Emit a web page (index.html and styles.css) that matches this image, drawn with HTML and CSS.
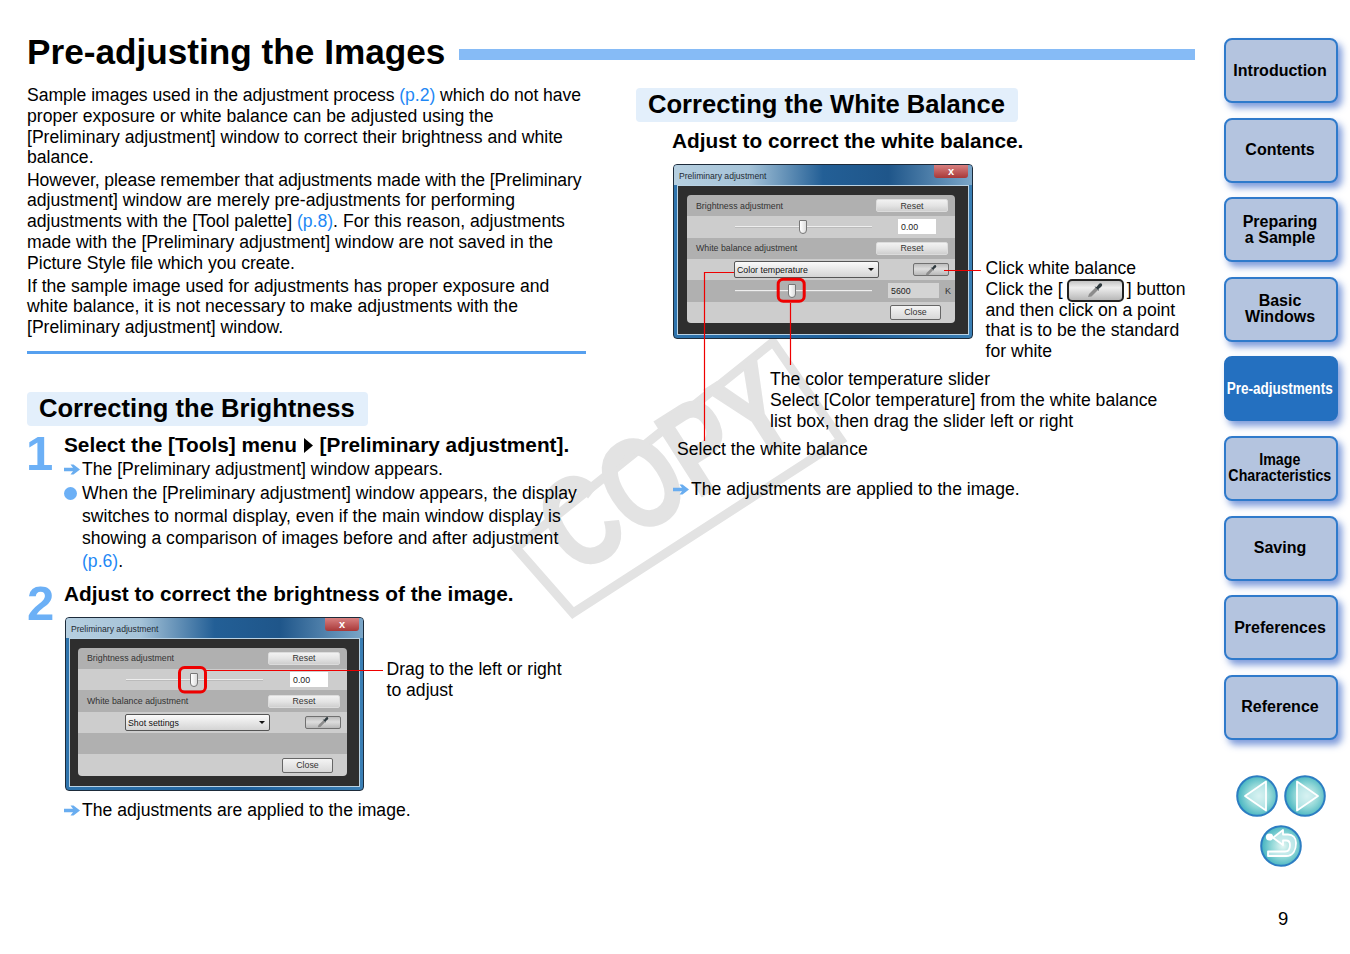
FILE: index.html
```html
<!DOCTYPE html>
<html lang="en">
<head>
<meta charset="utf-8">
<title>Pre-adjusting the Images</title>
<link rel="stylesheet" href="styles.css">
</head>
<body>
<svg width="0" height="0" class="defs">
  <defs>
    <radialGradient id="glass" cx="55%" cy="50%" r="55%">
      <stop offset="0" stop-color="#e4f7f4"/>
      <stop offset="0.55" stop-color="#8ed6d6"/>
      <stop offset="1" stop-color="#3fb1bf"/>
    </radialGradient>
    <symbol id="arrow" viewBox="0 0 16 11">
      <path d="M0 3.800H9L6.500 0.500H9.500L16 5.500 9.500 10.500H6.500L9 7.200H0Z" fill="#69adf0"/>
    </symbol>
    <symbol id="dropper" viewBox="0 0 16 16">
      <path d="M1 15 2 12 8.500 5.500 11 8 4.500 14.500Z" fill="#8c8c8c"/>
      <path d="M7.500 4.500 9.500 5 11.500 2.500Q13 .5 14.500 1.500 16 3 14 5L11.500 7 12 9Z" fill="#2f3a3f"/>
    </symbol>
  </defs>
</svg>
<div class="page">
  <main class="main">
    <svg class="watermark" width="900" height="400" aria-hidden="true">
      <polygon class="stamp" points="546,276 814,103 746,5 489,211"/>
      <text class="stamp-text" transform="translate(548,240) rotate(-32.500) scale(.75,1)">COPY</text>
    </svg>
    <header class="title-row">
      <h1 class="title">Pre-adjusting the Images</h1>
      <div class="title-bar"></div>
    </header>
    <div class="columns">
      <section class="col-left">
        <p class="para"><span class="tight">Sample images used in the adjustment process <a class="ref">(p.2)</a> which do not have</span><br>proper exposure or white balance can be adjusted using the<br>[Preliminary adjustment] window to correct their brightness and white<br>balance.</p>
        <p class="para para-b"><span class="tighter">However, please remember that adjustments made with the [Preliminary</span><br>adjustment] window are merely pre-adjustments for performing<br>adjustments with the [Tool palette] <a class="ref">(p.8)</a>. For this reason, adjustments<br>made with the [Preliminary adjustment] window are not saved in the<br>Picture Style file which you create.</p>
        <p class="para para-c">If the sample image used for adjustments has proper exposure and<br>white balance, it is not necessary to make adjustments with the<br>[Preliminary adjustment] window.</p>
        <div class="rule"></div>
        <h2 class="section section-bright">Correcting the Brightness</h2>

        <div class="step step-one">
          <div class="num num-one">1</div>
          <div class="step-body">
            <h3 class="step-head">Select the [Tools] menu <svg class="tri" width="9" height="15" viewBox="0 0 9 15"><path d="M0 0 9 7.500 0 15Z"/></svg> [Preliminary adjustment].</h3>
            <div class="item item-arrow"><svg class="arrow-icon" width="16" height="11"><use href="#arrow"/></svg><span>The [Preliminary adjustment] window appears.</span></div>
            <div class="item item-bullet"><span class="dot"></span><span>When the [Preliminary adjustment] window appears, the display<br>switches to normal display, even if the main window display is<br>showing a comparison of images before and after adjustment<br><a class="ref">(p.6)</a>.</span></div>
          </div>
        </div>

        <div class="step step-two">
          <div class="num num-two">2</div>
          <div class="step-body">
            <h3 class="step-head">Adjust to correct the brightness of the image.</h3>
            <div class="fig fig-bright">
              <div class="win">
                <div class="win-title"><span>Preliminary adjustment</span><b class="win-close">x</b></div>
                <div class="win-body"><div class="panel">
                  <div class="row row-dark"><span class="lbl">Brightness adjustment</span><span class="btn btn-reset">Reset</span></div>
                  <div class="row row-light row-slider"><span class="track"><i class="thumb thumb-mid"></i></span><span class="input">0.00</span></div>
                  <div class="row row-dark"><span class="lbl">White balance adjustment</span><span class="btn btn-reset">Reset</span></div>
                  <div class="row row-light row-select"><span class="select">Shot settings<i class="caret"></i></span><span class="btn btn-drop"><svg width="12" height="12"><use href="#dropper"/></svg></span></div>
                  <div class="row row-dark"></div>
                  <div class="row row-light row-close"><span class="btn btn-close">Close</span></div>
                </div></div>
              </div>
              <p class="callout callout-drag">Drag to the left or right<br>to adjust</p>
              <svg class="leader" aria-hidden="true">
                <rect class="ring" x="114.500" y="50.500" width="26" height="24.500" rx="5"/>
                <path class="line" d="M141 53.500H318"/>
              </svg>
            </div>
            <div class="item item-arrow item-after"><svg class="arrow-icon" width="16" height="11"><use href="#arrow"/></svg><span>The adjustments are applied to the image.</span></div>
          </div>
        </div>
      </section>

      <section class="col-right">
        <h2 class="section section-white">Correcting the White Balance</h2>
        <h3 class="step-head subhead">Adjust to correct the white balance.</h3>
        <div class="fig fig-white">
          <div class="win">
            <div class="win-title"><span>Preliminary adjustment</span><b class="win-close">x</b></div>
            <div class="win-body"><div class="panel">
              <div class="row row-dark"><span class="lbl">Brightness adjustment</span><span class="btn btn-reset">Reset</span></div>
              <div class="row row-light row-slider"><span class="track"><i class="thumb thumb-mid"></i></span><span class="input">0.00</span></div>
              <div class="row row-dark"><span class="lbl">White balance adjustment</span><span class="btn btn-reset">Reset</span></div>
              <div class="row row-light row-select"><span class="select">Color temperature<i class="caret"></i></span><span class="btn btn-drop"><svg width="12" height="12"><use href="#dropper"/></svg></span></div>
              <div class="row row-dark row-slider"><span class="track"><i class="thumb thumb-wb"></i></span><span class="input input-k">5600</span><span class="unit">K</span></div>
              <div class="row row-light row-close"><span class="btn btn-close">Close</span></div>
            </div></div>
          </div>
          <p class="callout callout-click">Click white balance<br>Click the [<span class="inline-btn"><svg width="16" height="16"><use href="#dropper"/></svg></span>] button<br>and then click on a point<br>that is to be the standard<br>for white</p>
          <svg class="leader" aria-hidden="true">
            <rect class="ring" x="105.200" y="115.200" width="26" height="22" rx="5"/>
            <path class="line" d="M271 106.500H308M61 108.500H31.500V277M117.500 139V201"/>
          </svg>
        </div>
        <p class="note note-slider">The color temperature slider<br>Select [Color temperature] from the white balance<br>list box, then drag the slider left or right</p>
        <p class="note note-select">Select the white balance</p>
        <div class="item item-arrow item-result"><svg class="arrow-icon" width="16" height="11"><use href="#arrow"/></svg><span>The adjustments are applied to the image.</span></div>
      </section>
    </div>
  </main>

  <aside class="side">
    <nav class="nav">
      <a class="nav-btn">Introduction</a>
      <a class="nav-btn">Contents</a>
      <a class="nav-btn">Preparing<br>a Sample</a>
      <a class="nav-btn">Basic<br>Windows</a>
      <a class="nav-btn nav-active"><span class="squeeze-more">Pre-adjustments</span></a>
      <a class="nav-btn"><span class="squeeze">Image<br>Characteristics</span></a>
      <a class="nav-btn">Saving</a>
      <a class="nav-btn">Preferences</a>
      <a class="nav-btn">Reference</a>
    </nav>
    <div class="pager">
      <svg class="round" width="42" height="42" viewBox="0 0 42 42"><circle cx="21" cy="21" r="19.800" fill="url(#glass)" stroke="#2c7dc2" stroke-width="2"/><path d="M30 6.500V35.500L9 21Z" fill="#cfeef0" fill-opacity=".6" stroke="#fff" stroke-width="1.800" stroke-linejoin="round"/></svg>
      <svg class="round" width="42" height="42" viewBox="0 0 42 42"><circle cx="21" cy="21" r="19.800" fill="url(#glass)" stroke="#2c7dc2" stroke-width="2"/><path d="M13 6.500V35.500L34 21Z" fill="#cfeef0" fill-opacity=".6" stroke="#fff" stroke-width="1.800" stroke-linejoin="round"/></svg>
      <svg class="round" width="42" height="42" viewBox="0 0 42 42"><circle cx="21" cy="21" r="19.800" fill="url(#glass)" stroke="#2c7dc2" stroke-width="2"/><circle cx="9.500" cy="12" r="3.600" fill="#fff"/><path d="M13 12.700 23 5V9.500H28C33 9.500 36 13 36 18 36 25 33 31 26 31H8V26.500H25C28 26.500 30 24 30 20 30 17 28 15.500 26 15.500H23V20Z" fill="#cfeef0" fill-opacity=".7" stroke="#fff" stroke-width="1.800" stroke-linejoin="round"/></svg>
    </div>
    <div class="page-num">9</div>
  </aside>
</div>
</body>
</html>
```
FILE: styles.css
```css
* { box-sizing: border-box; }
html, body { margin: 0; padding: 0; background: #fff; }
body {
  font-family: "Liberation Sans", Arial, sans-serif;
  font-size: 17.600px;
  line-height: 20.800px;
  color: #000;
}
.defs { position: absolute; }
.page { display: flex; height: 954px; overflow: hidden; }
.main { position: relative; width: 1195px; padding: 32px 0 0 27px; flex: none; }
.side { width: 114px; margin-left: 29px; padding-top: 38px; flex: none; }

/* watermark sits behind everything */
.watermark { position: absolute; left: 27px; top: 337px; overflow: visible; }
.stamp { fill: none; stroke: #e3e3e3; stroke-width: 9; }
.stamp-text { font: 700 128px "Liberation Sans", Arial, sans-serif; fill: #e3e3e3; stroke: #e3e3e3; stroke-width: 2px; }

.title-row { position: relative; display: flex; align-items: center; gap: 14px; height: 40px; }
.title { margin: 0; font-size: 35.200px; line-height: 40px; font-weight: 700; white-space: nowrap; }
.title-bar { flex: 1; height: 11px; margin-top: 5px; background: #86bbf6; }

.columns { position: relative; display: flex; gap: 50px; margin-top: 13px; }
.col-left { width: 559px; flex: none; }
.col-right { flex: 1; padding-top: 3px; }

.para { margin: 0; white-space: nowrap; }
.para-b { margin-top: 1.400px; }
.para-c { margin-top: 2px; }
.tight { letter-spacing: -.05px; }
.tighter { letter-spacing: -.1px; }
.ref { color: #1f88f5; }
.rule { height: 3px; margin-top: 13px; background: #56a0ef; }

.section {
  display: inline-block;
  height: 34px;
  margin: 0;
  padding: 0 14px 0 12px;
  border-radius: 4px;
  background: #e3effb;
  font-size: 25.600px;
  line-height: 32px;
  font-weight: 700;
  white-space: nowrap;
}
.section-bright { display: block; width: 341px; margin-top: 38px; }
.section-white { display: block; width: 382px; }

.step { display: flex; }
.step-one { margin-top: 7px; }
.step-two { margin-top: 9px; }
.num { width: 37px; flex: none; font-size: 49px; line-height: 40px; font-weight: 700; color: #6cb0f6; }
.num-one { margin-left: -1px; width: 38px; }
.num-two { padding-top: 1px; }
.step-body { flex: 1; min-width: 0; }
.step-head { margin: 0; font-size: 20.800px; line-height: 24px; font-weight: 700; white-space: nowrap; }
.subhead { margin: 7px 0 0 36px; }
.tri { margin: 0 1px; vertical-align: -1px; }

.item { display: flex; white-space: nowrap; }
.item-arrow { line-height: 22px; gap: 2px; margin-top: 1px; }
.item-bullet { line-height: 22.700px; margin-top: 2px; gap: 5px; }
.item-after { margin-top: 8px; }
.item-result { margin-top: 18px; margin-left: 37px; }
.arrow-icon { flex: none; margin-top: 6px; }
.dot { flex: none; width: 13px; height: 13px; margin-top: 5px; border-radius: 50%; background: #6cb0f6; }

.fig { position: relative; display: flex; }
.fig-bright { margin: 11px 0 0 1px; gap: 22.500px; }
.fig-white { margin: 11px 0 0 37px; gap: 12.500px; }
.callout { margin: 0; white-space: nowrap; }
.callout-drag { margin-top: 42px; }
.callout-click { margin-top: 94px; }
.inline-btn {
  display: inline-flex;
  align-items: center;
  justify-content: center;
  width: 57px;
  height: 23px;
  margin: -4px 3px -4px 4px;
  vertical-align: middle;
  border: 2px solid #222;
  border-radius: 5px;
  background: linear-gradient(#c4c4c4, #eeeeee 35%, #b8b8b8);
}
.note { margin: 0; white-space: nowrap; }
.note-slider { margin: 7px 0 0 134px; }
.note-select { margin: 8px 0 0 41px; }

.leader { position: absolute; left: 0; top: 0; width: 100%; height: 100%; overflow: visible; pointer-events: none; }
.ring { fill: none; stroke: #ee0000; stroke-width: 3; }
.line { fill: none; stroke: #ee0000; stroke-width: 1.200; }

/* dialog window */
.win {
  flex: none;
  width: 299px;
  height: 174px;
  padding: 0 3px 4px 3px;
  border: 1px solid #1d2b3a;
  border-radius: 4px;
  background: linear-gradient(90deg, #2f74ad, #1e5f9a 60%, #3a7fb5);
  font-size: 8.800px;
  line-height: 12px;
  color: #333;
  overflow: hidden;
}
.fig-white .win { width: 300px; height: 175px; }
.fig-white .win-body { height: 150px; padding-left: 9px; padding-right: 13px; }
.win-title {
  display: flex;
  justify-content: space-between;
  height: 20px;
  margin: 0 -3px;
  padding: 5px 4px 0 5px;
  background: linear-gradient(90deg, #b6cfe0, #a5c3d8 25%, #235f96 50%, #1f568a 72%, #7ba6c8);
  color: #1f2a33;
  font-size: 8.600px;
}
.win-close {
  width: 34px;
  height: 13px;
  margin-top: -5px;
  border-radius: 0 0 3px 3px;
  background: linear-gradient(#d88080, #a83838);
  color: #fff;
  font-size: 11px;
  line-height: 12px;
  text-align: center;
}
.win-body {
  height: 149px;
  padding: 9px 12px 10px 8px;
  border: 1px solid #b9d2e4;
  background: #2e2e2e;
}
.panel { height: 128px; border-radius: 4px; overflow: hidden; }
.row { display: flex; align-items: center; height: 21.333px; padding: 0 7px 0 9px; white-space: nowrap; }
.row-dark { background: #b0b0b0; }
.row-light { background: #cdcdcd; }
.lbl { flex: 1; }
.btn {
  display: flex;
  align-items: center;
  justify-content: center;
  height: 13px;
  border-radius: 2px;
  border: 1px solid #8a8a8a;
  background: linear-gradient(#f2f2f2, #e4e4e4 50%, #cfcfcf);
}
.btn-reset { width: 72px; border-color: #dcdcdc; }
.btn-drop { width: 36px; margin-left: auto; margin-right: -1px; background: linear-gradient(#bcbcbc, #dddddd 45%, #b8b8b8); border-color: #707070; }
.btn-close { width: 51px; height: 15px; margin-left: auto; margin-right: 7px; border-color: #666; background: linear-gradient(#f4f4f4, #d8d8d8); }
.row-slider { padding-left: 48px; }
.track { position: relative; width: 137px; height: 2px; background: #eee; border-bottom: 1px solid #bbb; }
.thumb {
  position: absolute;
  top: -6px;
  width: 8px;
  height: 14px;
  border: 1px solid #777;
  border-radius: 1px 1px 4px 4px;
  background: linear-gradient(90deg, #fff, #ddd);
}
.thumb-mid { left: 64px; }
.thumb-wb { left: 53px; }
.input { width: 38px; height: 15px; margin-left: auto; margin-right: 12px; padding: 2px 0 0 3px; background: #fff; color: #222; }
.input-k { width: 51px; margin-right: 5px; background: #d4d4d4; }
.unit { margin-left: 1px; margin-right: -3px; font-size: 9px; }
.row-select { padding-left: 47px; }
.select {
  position: relative;
  width: 145px;
  height: 17px;
  padding: 2px 0 0 2px;
  border: 1px solid #555;
  border-radius: 2px;
  background: linear-gradient(#fafafa, #d4d4d4);
  color: #111;
}
.caret {
  position: absolute;
  right: 4px;
  top: 6px;
  border: 3px solid transparent;
  border-top: 3px solid #111;
  border-bottom: 0;
}

/* side navigation */
.nav { display: flex; flex-direction: column; gap: 14.600px; }
.nav-btn {
  display: flex;
  align-items: center;
  justify-content: center;
  height: 65px;
  padding-right: 2px;
  border: 2px solid #2f7acb;
  border-radius: 8px;
  background: #b4c4df;
  box-shadow: 4px 5px 7px rgba(58, 103, 199, .65);
  font-size: 16px;
  line-height: 16px;
  font-weight: 700;
  text-align: center;
  white-space: nowrap;
}
.nav-active { border-color: #2470c0; background: #2470c0; color: #fff; }
.squeeze { display: block; transform: scaleX(.89); }
.squeeze-more { display: block; transform: scaleX(.845); }

.pager { display: flex; flex-wrap: wrap; justify-content: center; gap: 8px 6px; margin-top: 35px; }
.round { display: block; }
.page-num { margin-top: 41px; margin-left: 54px; font-size: 18.500px; line-height: 22px; }
```
